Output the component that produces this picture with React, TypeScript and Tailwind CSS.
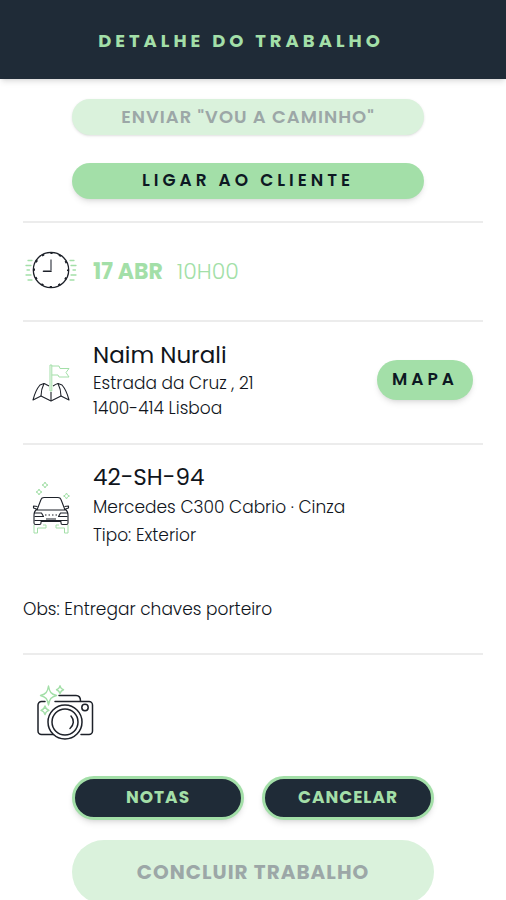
import type { ReactNode } from "react";

const DARK = "#1d2129";
const GREEN = "#a3dfa8";

function ClockIcon() {
  return (
    <svg width="54" height="44" viewBox="0 0 54 44" fill="none" strokeLinecap="round" aria-hidden="true">
      <circle cx="27" cy="20" r="17.700" stroke={DARK} strokeWidth="1.300" />
      <circle cx="27" cy="20" r="17" stroke={DARK} strokeWidth="2" strokeLinecap="butt" strokeDasharray="2.400 6.500" strokeDashoffset="1.200" />
      <path d="M27 9.500v11" stroke="#6b6f76" strokeWidth="1.600" strokeLinecap="butt" />
      <path d="M27 21.200h-7.500" stroke={DARK} strokeWidth="1.600" />
      <path
        d="M4 10.500h4M2 15.500h5M3 20h2.500M2 25h5M4 30h4M46 10.500h4M47 15.500h5M49 20h2.500M47 25h5M46 30h4"
        stroke={GREEN}
        strokeWidth="1.300"
      />
    </svg>
  );
}

function MapIcon() {
  return (
    <svg width="38" height="38" viewBox="0 0 38 38" fill="none" strokeLinejoin="round" aria-hidden="true">
      <g stroke={DARK} strokeWidth="1.100">
        <path d="M17 22c-2-1-3.500-2-5-2.500L8 21C4.500 25 2.500 30 1 36l8-4 10 5 10-5 8 4c-1.500-6-3.500-11-7-15l-4-1.500c-2 .5-3.500 1.500-5 2.500" />
        <path d="M12 19.500c-2 4-3 8-3 12.500M26 19.500c2 4 3 8 3 12.500M19 28v9" />
      </g>
      <path
        d="M18 27V1h1.800v26zM19.800 2H27l1 2.500h9l-3 4 3 4.500H27l-1-2h-6.200"
        stroke={GREEN}
        strokeWidth="1"
      />
    </svg>
  );
}

function CarIcon() {
  return (
    <svg width="38" height="53" viewBox="0 0 38 53" fill="none" strokeLinejoin="round" aria-hidden="true">
      <g stroke={DARK} strokeWidth="1.100">
        <path d="M5 29l4-10.500c.5-1.500 1.500-2 3-2h14c1.500 0 2.500.5 3 2L33 29z" />
        <path d="M5.500 25.500l-4-.5v2l3 1M32.500 25.500l4-.5v2l-3 1" />
        <path d="M5 28c-2 1.500-3 3-3 6v8c0 1 .5 1.500 1.500 1.500h4c1 0 1.500-.5 1.500-1.500v-1.500h20V42c0 1 .5 1.500 1.500 1.500h4c1 0 1.500-.5 1.500-1.500v-8c0-3-1-4.500-3-6" />
        <path d="M2.500 32h7l2 3.500h-9M35.500 32h-7l-2 3.500h9M2.500 39.500h33M13 34h1.500M16.500 34H18M20 34h1.500M23.500 34H25M14 38h10" />
      </g>
      <g stroke={GREEN} strokeWidth="1">
        <path d="M2 44v8h3.500v-5H14v-3h-3M36 44v8h-3.500v-5H24v-3h3" />
        <path d="M13 1l1 2 2 1-2 1-1 2-1-2-2-1 2-1zM7 8l1 2 2 1-2 1-1 2-1-2-2-1 2-1zM34.500 12l1 2 2 1-2 1-1 2-1-2-2-1 2-1z" />
      </g>
    </svg>
  );
}

function CameraIcon() {
  return (
    <svg width="57" height="56" viewBox="0 0 57 56" fill="none" strokeLinecap="round" strokeLinejoin="round" aria-hidden="true">
      <g stroke={DARK} strokeWidth="1.500">
        <path d="M18 16.500h34a3.500 3.500 0 0 1 3.500 3.500v26a3.500 3.500 0 0 1-3.500 3.500h-8M17 49.500H4.500A3.500 3.500 0 0 1 1 46V20a3.500 3.500 0 0 1 3.500-3.500H8" />
        <path d="M22 10.500h17c3 0 4.500 2 4.500 5.500" />
        <circle cx="28" cy="37" r="17" fill="white" />
        <circle cx="28" cy="37" r="13" />
        <path d="M34 31c3.500 4 3 9-1 12.500" />
        <circle cx="48" cy="22.500" r="3.200" />
      </g>
      <g stroke={GREEN} strokeWidth="1.400" fill="white">
        <path d="M11.500 1c1 6 2.500 8 8 9.500-5.500 1.500-7 3.500-8 9.500-1-6-2.500-8-8-9.500 5.500-1.500 7-3.500 8-9.500z" />
        <path d="M23 .800c.6 2.400 1.300 3.200 3.500 3.900-2.200.6-2.900 1.500-3.500 3.800-.6-2.300-1.300-3.200-3.500-3.800 2.200-.7 2.900-1.500 3.500-3.900zM8 21c.6 2.600 1.500 3.600 4 4.300-2.500.7-3.400 1.700-4 4.200-.6-2.500-1.500-3.500-4-4.200 2.500-.7 3.400-1.700 4-4.300z" />
      </g>
    </svg>
  );
}

function Row({ icon, children, className }: { icon: ReactNode; children: ReactNode; className: string }) {
  return (
    <section className={`flex items-center border-t-2 border-[#ececec] ${className}`}>
      <div className="flex w-14 shrink-0 justify-center">{icon}</div>
      <div className="ml-[14px] min-w-0 flex-1">{children}</div>
    </section>
  );
}

const wide = "h-9 w-full max-w-[352px] rounded-full";
const outlined =
  "h-11 flex-1 rounded-full border-3 border-[#a3dfa8] bg-[#1f2b37] text-[17px] font-bold tracking-[1px] text-[#a3dfa8] shadow-md";

export default function App() {
  return (
    <div className="min-h-screen bg-white font-['Poppins','Inter',sans-serif] text-[#10151c]">
      <header className="flex h-[79px] items-center justify-center bg-[#1f2b37] pt-0.5 pr-6 shadow-md">
        <h1 className="text-lg font-bold tracking-[4px] text-[#a3dfa8]">DETALHE DO TRABALHO</h1>
      </header>

      <main className="px-[23px] pt-5">
        <div className="flex flex-col items-center gap-7 pr-[10px] pb-[22px]">
          <button
            type="button"
            disabled
            className={`${wide} bg-[#daf2dc] text-lg font-semibold tracking-[1px] text-[#9ca7a7] shadow-sm`}
          >
            ENVIAR "VOU A CAMINHO"
          </button>
          <button
            type="button"
            className={`${wide} bg-[#a3dfa8] text-[17px] font-semibold tracking-[4px] text-[#0d1823] shadow-md`}
          >
            LIGAR AO CLIENTE
          </button>
        </div>

        <Row icon={<ClockIcon />} className="h-[99px]">
          <p className="flex gap-[14px] text-[22px] text-[#a3dfa8]">
            <span className="font-bold">17 ABR</span>
            <span className="font-light">10H00</span>
          </p>
        </Row>

        <Row icon={<MapIcon />} className="h-[123px]">
          <div className="flex items-center justify-between gap-3 pb-1.5">
            <div>
              <h2 className="text-[23px] leading-8">Naim Nurali</h2>
              <address className="text-[17px] leading-[25px] font-light not-italic">
                Estrada da Cruz , 21
                <br />
                1400-414 Lisboa
              </address>
            </div>
            <button
              type="button"
              className="mr-[10px] h-10 w-24 rounded-full bg-[#a3dfa8] text-[17px] font-semibold tracking-[4px] text-[#0d1823] shadow-md"
            >
              MAPA
            </button>
          </div>
        </Row>

        <Row icon={<CarIcon />} className="h-[127px]">
          <div className="pb-1.5">
            <h2 className="text-[23px] leading-8">42-SH-94</h2>
            <p className="text-[17px] leading-7 font-light">Mercedes C300 Cabrio · Cinza</p>
            <p className="text-[17px] leading-7 font-light">Tipo: Exterior</p>
          </div>
        </Row>

        <p className="pt-[26px] pb-[30px] text-[17px] leading-[27px] font-light">Obs: Entregar chaves porteiro</p>

        <section className="border-t-2 border-[#ececec] pt-[30px] pl-[14px]">
          <button type="button" aria-label="Fotografias" className="block">
            <CameraIcon />
          </button>
        </section>

        <footer className="mx-auto mt-[35px] flex w-full max-w-[362px] flex-col gap-5">
          <div className="flex gap-[18px]">
            <button type="button" className={outlined}>
              NOTAS
            </button>
            <button type="button" className={outlined}>
              CANCELAR
            </button>
          </div>
          <button
            type="button"
            disabled
            className="h-16 rounded-full bg-[#daf2dc] text-xl font-bold tracking-[1px] text-[#9ca7a7]"
          >
            CONCLUIR TRABALHO
          </button>
        </footer>
      </main>
    </div>
  );
}
